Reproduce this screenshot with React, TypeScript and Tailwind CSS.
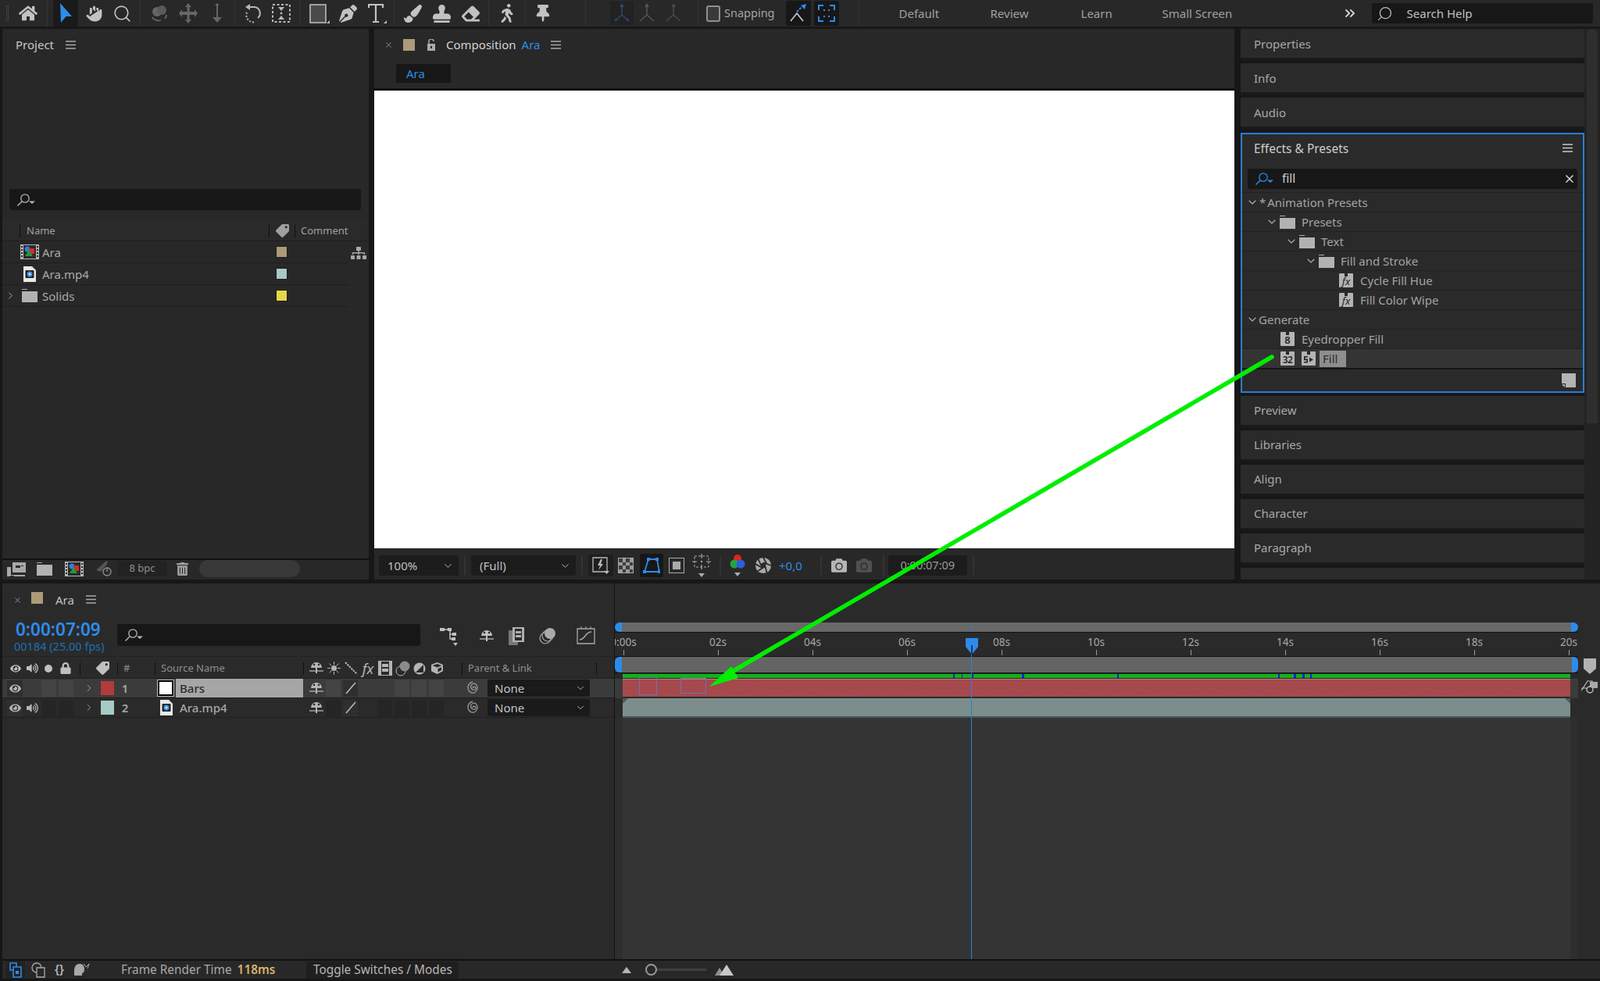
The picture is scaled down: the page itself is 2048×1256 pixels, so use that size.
import React from "react";
import { Hand, Search, X, ChevronDown, ChevronRight, ChevronsRight } from "lucide-react";
import { FaHome, FaPaintBrush, FaStamp, FaEraser, FaThumbtack, FaPenNib, FaCamera, FaEye, FaLock, FaVolumeUp, FaTag, FaSitemap, FaTrashAlt, FaWalking, FaCube } from "react-icons/fa";

const Menu = ({ c = "#a8a8a8" }: { c?: string }) => (
  <svg width="13" height="11" viewBox="0 0 13 11"><path d="M0 1h13M0 5.5h13M0 10h13" stroke={c} strokeWidth="1.3" /></svg>
);

const Find = ({ c = "#b4b4b4" }: { c?: string }) => (
  <svg width="25" height="18" viewBox="0 0 25 18" fill="none">
    <circle cx="11" cy="7" r="5.2" stroke={c} strokeWidth="1.3" />
    <path d="M7 11 L1.5 16.5" stroke={c} strokeWidth="1.5" />
    <path d="M16 10.5h8l-4 3.5z" fill={c} />
  </svg>
);

const Comp = ({ w = 24, h = 19 }: { w?: number; h?: number }) => (
  <svg width={w} height={h} viewBox="0 0 24 19">
    <rect x="0" y="0" width="24" height="19" fill="#b5b5b5" />
    <rect x="4" y="1" width="16" height="17" fill="#2a2a2a" />
    <path d="M1 2h2v2H1zM1 6h2v2H1zM1 10h2v2H1zM1 14h2v2H1zM21 2h2v2h-2zM21 6h2v2h-2zM21 10h2v2h-2zM21 14h2v2h-2z" fill="#2a2a2a" />
    <circle cx="9" cy="6" r="3.4" fill="#2d7fe0" />
    <rect x="11" y="5" width="7" height="7" fill="#d12c2c" />
    <path d="M11 7 L16 15 H6z" fill="#1f9a3a" />
  </svg>
);

const MovieFile = () => (
  <svg width="16" height="20" viewBox="0 0 16 20">
    <path d="M0 0h11l5 5v15H0z" fill="#e8e8e8" />
    <rect x="2.5" y="5" width="11" height="10" rx="1" fill="#222" />
    <circle cx="8" cy="10" r="3.4" fill="#3f97e8" />
    <circle cx="8" cy="10" r="1.3" fill="#dcecff" />
  </svg>
);

const Badge = ({ kind }: { kind: "fx" | "8" | "32" | "fr" }) => (
  <span className="relative flex h-[18px] w-[18px] shrink-0 items-end justify-center rounded-[1px] bg-[#b4b4b4] text-[#262626]">
    <span className="absolute left-[7px] top-0 h-[4px] w-[4px] bg-[#292929]" />
    {kind === "fx" && <span className="font-['Liberation_Serif',serif] text-[13px] italic leading-[15px]">fx</span>}
    {kind === "8" && <span className="text-[13px] font-semibold leading-[15px]">8</span>}
    {kind === "32" && <span className="text-[12px] font-semibold leading-[14px] tracking-[-0.5px]">32</span>}
    {kind === "fr" && (
      <svg width="14" height="11" viewBox="0 0 14 11" className="mb-[2px]"><path d="M1 1h5v1.6H2.6v2H6v5H1V8h3.4V6.2H1zM8 2.5l5 3-5 3z" fill="#262626" /></svg>
    )}
  </span>
);

const Folder = () => (
  <svg width="20" height="17" viewBox="0 0 20 17" className="block"><path d="M0 0h7v1H0zM0 3h20v14H0z" fill="#b2b2b2" /></svg>
);

const Chevron = () => <ChevronDown size={16} strokeWidth={1.6} className="shrink-0 text-[#b0b0b0]" />;

const Orbit = () => (
  <svg width="26" height="26" viewBox="0 0 26 26" fill="none">
    <circle cx="10" cy="11" r="6" fill="#666" /><circle cx="16" cy="9" r="6" fill="#5a5a5a" />
    <path d="M4 18c2 4 7 5 11 4M22 15c0 2-1 4-2 5" stroke="#666" strokeWidth="1.8" />
  </svg>
);
const MoveCross = () => (
  <svg width="24" height="26" viewBox="0 0 24 26"><path d="M12 0l4 5h-2.5v6H20V8l4 5-4 5v-3h-6.500v6H16l-4 5-4-5h2.500v-6H4v3l-4-5 4-5v3h6.500V5H8z" fill="#666" /></svg>
);
const Dolly = () => (
  <svg width="18" height="26" viewBox="0 0 18 26"><path d="M9 0l3 3h-2v15h5l-6 7-6-7h5V3H6z" fill="#666" /></svg>
);
const RotateTool = () => (
  <svg width="24" height="26" viewBox="0 0 24 26" fill="none">
    <path d="M6 5h8a8 8 0 0 1 4 14" stroke="#b9b9b9" strokeWidth="2" />
    <path d="M8 1L2 5l6 4z" fill="#b9b9b9" />
    <path d="M4 12a9 9 0 0 0 11 12" stroke="#b9b9b9" strokeWidth="2" strokeDasharray="2 2" />
  </svg>
);
const Anchor = () => (
  <svg width="24" height="24" viewBox="0 0 24 24" fill="none">
    <rect x="1" y="1" width="22" height="22" stroke="#b9b9b9" strokeWidth="2" strokeDasharray="3 2.500" />
    <path d="M8 4h8l-4 5zM8 20h8l-4-5z" fill="#b9b9b9" /><circle cx="12" cy="12" r="1.400" fill="#b9b9b9" />
  </svg>
);
const RectTool = () => (
  <svg width="26" height="25" viewBox="0 0 26 25"><rect x="1" y="1" width="20" height="23" fill="#4a4a4a" stroke="#b9b9b9" strokeWidth="1.600" /><path d="M26 25h-4l4-4z" fill="#b9b9b9" /></svg>
);
const TypeTool = () => (
  <svg width="24" height="25" viewBox="0 0 24 25" fill="none"><path d="M1 5V1h18v4M10 1v21M6 23h8" stroke="#c2c2c2" strokeWidth="2.200" /><path d="M24 25h-4l4-4z" fill="#b9b9b9" /></svg>
);
const Axis = ({ c, filled }: { c: string; filled?: boolean }) => (
  <svg width="24" height="26" viewBox="0 0 24 26" fill="none">
    <path d="M12 2v13M12 15L3 23M12 15l9 8" stroke={c} strokeWidth="1.500" />
    <path d="M12 0l3 5H9z" fill={c} />
    {filled && <path d="M3 23l1-4 3 3zM21 23l-1-4-3 3z" fill={c} />}
  </svg>
);
const Snap1 = () => (
  <svg width="22" height="24" viewBox="0 0 22 24" fill="none">
    <path d="M1 22 L9 12 L17 22" stroke="#c9c9c9" strokeWidth="1.700" />
    <path d="M9 10l6-6" stroke="#2d8ceb" strokeWidth="2" strokeDasharray="3 1.500" /><path d="M21 0l-2 7-5-5z" fill="#2d8ceb" />
  </svg>
);
const Snap2 = () => (
  <svg width="22" height="22" viewBox="0 0 22 22" fill="none">
    <path d="M1 7V1h6M15 1h6v6M1 15v6h6M15 21h6v-6" stroke="#2d8ceb" strokeWidth="2" />
    <path d="M7 7h2M13 7h2M7 15h2M13 15h2" stroke="#2d8ceb" strokeWidth="2" />
  </svg>
);

const TG = ({ cls, children }: { cls: string; children?: React.ReactNode }) => (
  <div className={`flex h-full shrink-0 items-center border-l border-[#333] ${cls}`}>{children}</div>
);
const Slot = ({ children, wide }: { children: React.ReactNode; wide?: boolean }) => (
  <span className={`relative flex shrink-0 justify-center ${wide ? "w-[37px]" : "w-[36px]"}`}>{children}</span>
);

const Toolbar = () => (
  <div className="flex h-[34px] items-center bg-[#282828] text-[#c2c2c2]">
    <div className="flex h-full w-[60px] shrink-0 items-center pl-[8px]">
      <span className="mr-[13px] h-[20px] w-[3px] border-x border-dotted border-[#555]" />
      <FaHome size={24} />
    </div>
    <TG cls="w-[119px] pl-[5px]">
      <Slot>
        <span className="flex h-[34px] w-[32px] items-center justify-center rounded-[3px] bg-[#1a1a1a]">
          <svg width="18" height="26" viewBox="0 0 18 26"><path d="M2 0 L17 17 L9.500 17 L3 25z" fill="#2d8ceb" /></svg>
        </span>
      </Slot>
      <Slot><Hand size={25} fill="#c2c2c2" strokeWidth={1} stroke="#282828" /></Slot>
      <Slot><Search size={25} strokeWidth={1.5} /></Slot>
    </TG>
    <TG cls="w-[121px] pl-[5px]"><Slot wide><Orbit /></Slot><Slot wide><MoveCross /></Slot><Slot wide><Dolly /></Slot></TG>
    <TG cls="w-[84px] pl-[5px]"><Slot><RotateTool /></Slot><Slot><Anchor /></Slot></TG>
    <TG cls="w-[120px] pl-[5px]"><Slot wide><RectTool /></Slot><Slot wide><FaPenNib size={23} /></Slot><Slot wide><TypeTool /></Slot></TG>
    <TG cls="w-[121px] pl-[5px]"><Slot wide><FaPaintBrush size={23} /></Slot><Slot wide><FaStamp size={23} /></Slot><Slot wide><FaEraser size={23} /></Slot></TG>
    <TG cls="w-[47px] pl-[4px]"><Slot wide><FaWalking size={24} /></Slot></TG>
    <TG cls="w-[77px] pl-[3px]"><Slot wide><FaThumbtack size={22} /></Slot></TG>
    <div className="flex h-full w-[144px] shrink-0 items-center border-l border-[#333] pl-[31px]">
      <span className="flex h-[30px] w-[30px] items-center justify-center rounded-[2px] bg-[#222]"><Axis c="#2c4a6b" filled /></span>
      <span className="ml-[5px]"><Axis c="#555" /></span>
      <span className="ml-[10px]"><Axis c="#4a4a4a" /></span>
    </div>
    <div className="flex h-full shrink-0 items-center border-l border-[#333] pl-[10px]">
      <span className="h-[21px] w-[18px] rounded-[3px] border-2 border-[#8f8f8f] bg-[#3a3a3a]" />
      <span className="ml-[5px] text-[14.500px] text-[#a4a4a4]">Snapping</span>
      <span className="ml-[14px] flex h-[32px] w-[32px] items-center justify-center rounded-[3px] bg-[#171717]"><Snap1 /></span>
      <span className="ml-[4px] flex h-[32px] w-[32px] items-center justify-center rounded-[3px] bg-[#171717]"><Snap2 /></span>
    </div>
    <div className="ml-[25px] flex h-full items-center border-l border-[#333] text-[15px] text-[#a0a0a0]">
      <span className="ml-[51px] w-[117px]">Default</span>
      <span className="w-[116px]">Review</span>
      <span className="w-[104px]">Learn</span>
      <span className="w-[234px]">Small Screen</span>
      <ChevronsRight size={20} strokeWidth={2.4} className="-ml-[4px] mr-[18px] text-[#d0d0d0]" />
      <div className="flex h-[26px] w-[283px] items-center rounded-[3px] bg-[#171717] pl-[6px] text-[#c0c0c0]">
        <Search size={21} strokeWidth={1.4} className="-scale-x-100" />
        <span className="ml-[18px]">Search Help</span>
      </div>
    </div>
  </div>
);

const PRow = ({ icon, name, sw, chev }: { icon: React.ReactNode; name: string; sw: string; chev?: boolean }) => (
  <div className="flex h-[28px] items-center border-b border-[#1e1e1e] text-[15px] text-[#a8a8a8]">
    <span className="flex w-[20px] shrink-0 justify-center">{chev && <ChevronRight size={15} strokeWidth={1.600} />}</span>
    <span className="flex w-[29px] shrink-0 justify-center">{icon}</span>
    <span className="ml-[2px] w-[299px] pt-[2px]">{name}</span>
    <span className="h-[15px] w-[15px] border border-[#1e1e1e]" style={{ background: sw }} />
  </div>
);

const ProjectPanel = () => (
  <div className="flex h-full w-[469px] shrink-0 flex-col bg-[#282828] text-[#a8a8a8]">
    <div className="flex h-[40px] items-center pl-[17px] text-[15px] text-[#c8c8c8]">
      <span>Project</span><span className="ml-[15px]"><Menu /></span>
    </div>
    <div className="h-[165px]" />
    <div className="ml-[9px] flex h-[27px] w-[450px] items-center rounded-[3px] bg-[#171717] pl-[9px]"><Find /></div>
    <div className="mt-[12px] flex h-[28px] w-[466px] items-center border-b border-[#1e1e1e] bg-[#2a2a2a] pt-[2px] text-[13px] text-[#a0a0a0]">
      <span className="ml-[22px] h-[16px] w-[1px] bg-[#111]" />
      <span className="ml-[8px] w-[310px]">Name</span>
      <span className="h-[16px] w-[1px] bg-[#111]" />
      <FaTag size={17} className="mx-[7.500px] rotate-90" />
      <span className="h-[16px] w-[1px] bg-[#111]" />
      <span className="ml-[7px]">Comment</span>
    </div>
    <div className="flex">
      <div className="w-[443px] shrink-0">
        <PRow icon={<Comp />} name="Ara" sw="#ac9a78" />
        <PRow icon={<MovieFile />} name="Ara.mp4" sw="#a6cac6" />
        <PRow icon={<Folder />} name="Solids" sw="#e4d84a" chev />
      </div>
      <div className="flex flex-1 justify-center pt-[5px] text-[#a8a8a8]"><FaSitemap size={20} /></div>
    </div>
    <div className="flex-1" />
    <div className="flex h-[27px] items-center border-t-2 border-[#111] pb-[3px] text-[#a0a0a0]">
      <span className="ml-[5px] flex">
        <svg width="25" height="19" viewBox="0 0 25 19"><path d="M8 1h17v13H8z" fill="#a8a8a8" /><path d="M12 5h6v3h-6zM19 5h3v1h-3z" fill="#282828" /><path d="M1 7h5v10h18v2H10v-1H5v1H1z" fill="#a8a8a8" /></svg>
      </span>
      <span className="ml-[14px]"><Folder /></span>
      <span className="ml-[16px] flex"><Comp /></span>
      <span className="ml-[15px] flex">
        <svg width="22" height="22" viewBox="0 0 22 22" fill="none"><path d="M1 13 L13 2 L16 1 L15 5 L7 15z" fill="#555" /><circle cx="15" cy="15" r="5" stroke="#8c8c8c" strokeWidth="1.400" /><path d="M15 9v6" stroke="#8c8c8c" strokeWidth="1.400" /></svg>
      </span>
      <span className="ml-[6px] flex h-[20px] w-[64px] items-center justify-center rounded-[3px] bg-[#222] text-[13px] text-[#909090]">8 bpc</span>
      <FaTrashAlt size={17} className="ml-[11px]" />
      <span className="ml-[13px] h-[22px] w-[129px] rounded-full bg-[#383838]" />
    </div>
  </div>
);

const FootSep = () => <span className="mx-[7px] h-[24px] w-[2px] shrink-0 bg-[#333]" />;
const Drop = ({ cls, label }: { cls: string; label: string }) => (
  <div className={`flex h-[26px] shrink-0 items-center justify-between rounded-[3px] bg-[#1c1c1c] pl-[11px] pr-[6px] text-[15px] text-[#c0c0c0] ${cls}`}>
    <span>{label}</span><ChevronDown size={15} strokeWidth={1.500} />
  </div>
);

const CompFooter = () => (
  <div className="flex h-[39px] items-center pl-[6px] pt-[5px] text-[#b5b5b5]">
    <Drop cls="w-[102px]" label="100%" />
    <FootSep />
    <Drop cls="w-[134px]" label="(Full)" />
    <FootSep />
    <span className="flex h-[28px] w-[32px] items-center justify-center rounded-[3px] bg-[#1f1f1f]">
      <svg width="22" height="22" viewBox="0 0 22 22" fill="none"><path d="M1 1h18v18H1z" stroke="#bbb" strokeWidth="1.300" /><path d="M11 3L7 11h3l-2 6 6-8h-3l2-6z" fill="#bbb" /><path d="M15 18h7l-3.500 4z" fill="#bbb" /></svg>
    </span>
    <span className="ml-[6px] grid h-[20px] w-[20px] grid-cols-4 border border-[#aaa]">
      {Array.from({ length: 16 }).map((_, i) => <span key={i} className={(i + (i >> 2)) % 2 ? "bg-[#9a9a9a]" : "bg-[#3d3d3d]"} />)}
    </span>
    <span className="ml-[8px] flex h-[30px] w-[30px] items-center justify-center rounded-[3px] bg-[#171717]">
      <svg width="22" height="20" viewBox="0 0 22 20" fill="none"><path d="M7 2h11l3 16H2z" stroke="#2d8ceb" strokeWidth="1.800" /><path d="M5 0h4v4H5zM16 0h4v4h-4zM0 16h4v4H0zM19 16h3v4h-3z" fill="#2d8ceb" /></svg>
    </span>
    <span className="ml-[7px] flex h-[20px] w-[20px] items-center justify-center border border-[#aaa]"><span className="h-[10px] w-[10px] bg-[#aaa]" /></span>
    <span className="ml-[10px] mr-[4px] flex">
      <svg width="24" height="30" viewBox="0 0 24 30" fill="none"><path d="M3 3h18v14H3z" stroke="#aaa" strokeDasharray="3 2" /><path d="M12 0v6M12 14v6M0 10h6M18 10h6" stroke="#aaa" strokeWidth="1.200" /><circle cx="12" cy="10" r="1.200" fill="#aaa" /><path d="M8 25h8l-4 5z" fill="#aaa" /></svg>
    </span>
    <FootSep />
    <span className="ml-[3px] flex">
      <svg width="22" height="30" viewBox="0 0 22 30"><circle cx="11" cy="6" r="5" fill="#e0241f" /><circle cx="7" cy="13" r="5.500" fill="#27a33c" /><circle cx="15" cy="13" r="5.500" fill="#2b5fe0" /><path d="M7 24h8l-4 5z" fill="#aaa" /></svg>
    </span>
    <span className="ml-[11px] flex">
      <svg width="22" height="24" viewBox="0 0 24 24" fill="none">
        <circle cx="12" cy="12" r="11" fill="#aaa" />
        <path d="M12 1 L17 10 M23 12 L12 8 M17 22 L14 11 M4 20 L12 15 M1 10 L10 15 M5 3 L9 12" stroke="#2a2a2a" strokeWidth="2" />
        <circle cx="12" cy="12" r="3.500" fill="#2a2a2a" />
      </svg>
    </span>
    <span className="ml-[9px] mr-[16px] text-[15px] text-[#2d8ceb]">+0,0</span>
    <FootSep />
    <FaCamera size={20} className="ml-[5px]" />
    <FaCamera size={20} className="ml-[12px] mr-[7px] text-[#515151]" />
    <FootSep />
    <span className="-ml-[2px] flex h-[26px] w-[101px] items-center justify-center rounded-[3px] bg-[#1c1c1c] text-[14.500px] text-[#9a9a9a]">0:00:07:09</span>
    <FootSep />
  </div>
);

const CompPanel = () => (
  <div className="ml-[7px] flex h-full w-[1101px] shrink-0 flex-col bg-[#282828]">
    <div className="flex h-[40px] items-center text-[15px] text-[#d2d2d2]">
      <X size={11} className="ml-[13px] text-[#9a9a9a]" />
      <span className="ml-[13px] h-[15px] w-[15px] bg-[#ac9a78]" />
      <span className="ml-[15px]">
        <svg width="12" height="15" viewBox="0 0 12 15" fill="none"><path d="M3 6V3a3 3 0 0 1 6 0" stroke="#aaa" strokeWidth="1.500" /><rect x="1" y="6" width="10" height="9" fill="#aaa" /><rect x="5" y="9" width="2" height="3" fill="#282828" /></svg>
      </span>
      <span className="ml-[13px]">Composition</span>
      <span className="ml-[7px] text-[#2d8ceb]">Ara</span>
      <span className="ml-[14px]"><Menu /></span>
    </div>
    <div className="ml-[28px] mt-[5px] flex h-[24px] w-[70px] items-center rounded-[2px] bg-[#171717] pl-[13px] text-[15px] text-[#2d8ceb]">Ara</div>
    <div className="mt-[7px] h-[3px] bg-[#111]" />
    <div className="h-[586px] w-full bg-white" />
    <CompFooter />
  </div>
);

const Tab = ({ t, cls = "" }: { t: string; cls?: string }) => (
  <div className={`mb-[4px] flex h-[40px] shrink-0 items-center border-b-[3px] border-[#1a1a1a] bg-[#2a2a2a] pl-[17px] text-[15px] text-[#a8a8a8] ${cls}`}>{t}</div>
);

const ERow = ({ pad, children, cls = "" }: { pad: string; children: React.ReactNode; cls?: string }) => (
  <div className={`flex h-[25px] items-center border-t border-[#222] text-[15px] text-[#a4a4a4] ${pad} ${cls}`}>{children}</div>
);

const EffectsPanel = () => (
  <div className="mb-[4px] flex h-[333px] shrink-0 flex-col border-2 border-[#2b7dd4] bg-[#2a2a2a]">
    <div className="flex h-[44px] shrink-0 items-start justify-between pl-[15px] pr-[13px] pt-[7px] text-[15.500px] text-[#cccccc]">
      <span>Effects &amp; Presets</span><span className="mt-[5px]"><Menu c="#c8c8c8" /></span>
    </div>
    <div className="mx-[7px] flex h-[26px] items-center justify-between rounded-[3px] bg-[#171717] pl-[9px] pr-[2px] text-[15.500px] text-[#cccccc]">
      <span className="flex items-center"><Find c="#2d8ceb" /><span className="ml-[10px]">fill</span></span>
      <X size={16} strokeWidth={2.500} className="text-[#d0d0d0]" />
    </div>
    <div className="mt-[4px] flex flex-col">
      <ERow pad="pl-[5px]"><Chevron /><span className="ml-[1px] -mr-[3px]">*</span><span className="ml-[5px]">Animation Presets</span></ERow>
      <ERow pad="pl-[30px]"><Chevron /><span className="ml-[2px]"><Folder /></span><span className="ml-[8px]">Presets</span></ERow>
      <ERow pad="pl-[55px]"><Chevron /><span className="ml-[2px]"><Folder /></span><span className="ml-[8px]">Text</span></ERow>
      <ERow pad="pl-[80px]"><Chevron /><span className="ml-[2px]"><Folder /></span><span className="ml-[8px]">Fill and Stroke</span></ERow>
      <ERow pad="pl-[124px]"><Badge kind="fx" /><span className="ml-[9px]">Cycle Fill Hue</span></ERow>
      <ERow pad="pl-[124px]"><Badge kind="fx" /><span className="ml-[9px]">Fill Color Wipe</span></ERow>
      <ERow pad="pl-[5px]"><Chevron /><span>Generate</span></ERow>
      <ERow pad="pl-[49px]"><Badge kind="8" /><span className="ml-[9px]">Eyedropper Fill</span></ERow>
      <ERow pad="pl-[49px]" cls="bg-[#343434]">
        <Badge kind="32" /><span className="ml-[9px]"><Badge kind="fr" /></span>
        <span className="ml-[5px] flex h-[21px] w-[34px] items-center bg-[#8e8e8e] pl-[4px] text-[#2c2c2c]">Fill</span>
      </ERow>
    </div>
    <div className="flex flex-1 items-center justify-end border-t-2 border-[#141414] pr-[9px]">
      <svg width="18" height="18" viewBox="0 0 18 18"><path d="M0 0h18v18H5v-5H0z" fill="#b4b4b4" /><path d="M0 14h4v4z" fill="#b4b4b4" /></svg>
    </div>
  </div>
);

const RightColumn = () => (
  <div className="ml-[8px] flex h-full w-[440px] shrink-0 flex-col overflow-hidden">
    <Tab t="Properties" cls="pt-[2px]" /><Tab t="Info" cls="pt-[2px]" /><Tab t="Audio" cls="pt-[2px]" />
    <div className="mt-[1px]"><EffectsPanel /></div>
    <Tab t="Preview" /><Tab t="Libraries" /><Tab t="Align" /><Tab t="Character" /><Tab t="Paragraph" />
    <div className="flex h-[40px] shrink-0 items-start bg-[#2a2a2a] pl-[17px] pt-[9px] text-[15px] text-[#a8a8a8]">Tools</div>
  </div>
);

const Scroll = () => (
  <div className="flex h-full flex-1 justify-center bg-[#232323]">
    <div className="h-[505px] w-[14px] rounded-t-[6px] bg-[#2e2e2e]" />
  </div>
);

const SwitchBox = ({ on }: { on?: boolean }) => (
  <span className={`block h-[21px] w-[19px] shrink-0 ${on ? "bg-[#444]" : "bg-[#252525]"}`} />
);

const Shy = ({ c = "#b5b5b5" }: { c?: string }) => (
  <svg width="18" height="19" viewBox="0 0 18 19" fill="none" className="block"><path d="M2 9a7 7 0 0 1 14 0z" fill={c} /><path d="M8 9h2v7H8z" fill={c} /><path d="M0 13h18" stroke={c} strokeWidth="1.300" /><circle cx="6" cy="5" r="1.300" fill="#2a2a2a" /><circle cx="12" cy="5" r="1.300" fill="#2a2a2a" /></svg>
);

const Spiral = () => (
  <svg width="17" height="18" viewBox="0 0 17 18" fill="none" className="block"><path d="M8 9a2 2 0 1 1 3 2 4 4 0 1 1 2-6c2 3 1 8-3 10a6.500 6.500 0 0 1-8-6c0-4 2-7 6-8" stroke="#9a9a9a" strokeWidth="1.300" /></svg>
);

const ParentDrop = () => (
  <span className="ml-[10.500px] flex h-[22px] w-[131px] shrink-0 items-center justify-between rounded-[2px] bg-[#1a1a1a] pl-[9px] pr-[5px] text-[15px] text-[#c2c2c2]">
    None<ChevronDown size={14} strokeWidth={1.500} />
  </span>
);

const LayerRow = ({ n, label, selected, name, nameIcon, audio, boxes }: { n: string; label: string; selected?: boolean; name: string; nameIcon: React.ReactNode; audio?: boolean; boxes: number }) => (
  <div className={`flex h-[25px] items-center border-b border-[#1f1f1f] ${selected ? "bg-[#3b3b3b]" : "bg-[#2a2a2a]"} text-[#b5b5b5]`}>
    <span className="ml-[6px] flex h-[21px] w-[20px] shrink-0 items-center justify-center bg-[#2f2f2f]"><FaEye size={15} /></span>
    <span className="ml-[1px] flex w-[22px] shrink-0 justify-center">{audio && <FaVolumeUp size={15} />}</span>
    <span className="ml-[1px]"><SwitchBox on={selected} /></span>
    <span className="ml-[3px]"><SwitchBox on={selected} /></span>
    <span className="ml-[13px] flex w-[14px] shrink-0 justify-center"><ChevronRight size={14} strokeWidth={1.400} /></span>
    <span className="ml-[7.500px] h-[18px] w-[17px] shrink-0" style={{ background: label }} />
    <span className="ml-[6.500px] w-[16px] shrink-0 text-center text-[15px] font-semibold text-[#a8a8a8]">{n}</span>
    <span className="ml-[34px] flex w-[23px] shrink-0 justify-start">{nameIcon}</span>
    <span className={`h-full w-[163px] shrink-0 pl-[5px] text-[15px] leading-[24px] ${selected ? "bg-[#a6a6a6] font-medium text-[#2c2c2c]" : "font-medium text-[#a8a8a8]"}`}>{name}</span>
    <span className="ml-[8px] shrink-0"><Shy /></span>
    <span className="ml-[3px]"><SwitchBox on={selected} /></span>
    <span className="ml-[3px] flex h-[21px] w-[19px] shrink-0 items-center justify-center bg-[#2f2f2f]">
      <svg width="14" height="16" viewBox="0 0 14 16"><path d="M1 15 L13 1" stroke="#bdbdbd" strokeWidth="1.500" /></svg>
    </span>
    <span className="ml-[22px] flex w-[88px] shrink-0 justify-end gap-[3px]">
      {Array.from({ length: boxes }).map((_, i) => <SwitchBox key={i} on={selected} />)}
    </span>
    <span className="ml-[28.500px] shrink-0"><Spiral /></span>
    <ParentDrop />
  </div>
);

const HSlot = ({ children }: { children: React.ReactNode }) => <span className="flex w-[22px] shrink-0 justify-center">{children}</span>;

const LeftTimeline = () => (
  <div className="flex h-full w-[783px] shrink-0 flex-col text-[#a8a8a8]">
    <div className="flex h-[48px] items-start pl-[14px] pt-[10px] text-[15px] text-[#c2c2c2]">
      <X size={11} className="mt-[6px] text-[#9a9a9a]" />
      <span className="ml-[12px] mt-[1px] h-[15px] w-[15px] bg-[#ac9a78]" />
      <span className="ml-[16px]">Ara</span>
      <span className="ml-[15px] mt-[5px]"><Menu /></span>
    </div>
    <div className="flex h-[45px] items-start">
      <div className="w-[147px] shrink-0 pl-[17px]">
        <div className="text-[22.500px] font-semibold leading-[22px] text-[#2d8ceb]">0:00:07:09</div>
        <div className="-ml-[2px] mt-[2px] whitespace-nowrap text-[14.500px] leading-[17px] text-[#1e6fb5]">00184 (25.00 fps)</div>
      </div>
      <div className="mt-[4px] flex h-[28px] w-[388px] items-center rounded-[3px] bg-[#171717] pl-[9px]"><Find /></div>
      <div className="ml-[25px] mt-[6px] flex items-center text-[#a8a8a8]">
        <svg width="24" height="26" viewBox="0 0 24 26" fill="none"><path d="M3 5h10M13 5v6h5M13 11v6h4" stroke="#c0c0c0" strokeWidth="1.500" /><rect x="0" y="3" width="6" height="4" fill="#c0c0c0" /><rect x="10" y="3" width="5" height="4" fill="#c0c0c0" /><rect x="16" y="9" width="5" height="4" fill="#c0c0c0" /><rect x="15" y="15" width="5" height="4" fill="#c0c0c0" /><path d="M17 22h6l-3 4z" fill="#c0c0c0" /></svg>
        <span className="ml-[27px]"><Shy c="#c0c0c0" /></span>
        <span className="ml-[19px] flex">
          <svg width="20" height="24" viewBox="0 0 20 24"><rect x="0" y="5" width="12" height="19" fill="#777" /><rect x="5" y="1" width="15" height="19" fill="#b0b0b0" /><rect x="8" y="3" width="9" height="15" fill="#2a2a2a" /><path d="M9 6h7v3H9zM9 11h7v3H9z" fill="#b0b0b0" /></svg>
        </span>
        <span className="ml-[19px] flex">
          <svg width="22" height="24" viewBox="0 0 22 24" fill="none"><circle cx="8" cy="15" r="7" stroke="#aaa" strokeWidth="1.200" /><circle cx="11" cy="12" r="7" stroke="#aaa" strokeWidth="1.200" /><circle cx="14" cy="9" r="7" fill="#aaa" /></svg>
        </span>
        <span className="ml-[26px] flex">
          <svg width="24" height="26" viewBox="0 0 24 26" fill="none"><path d="M1 4h22v19H1z" stroke="#aaa" strokeWidth="1.300" /><path d="M4 18c7 0 7-10 15-10" stroke="#aaa" strokeWidth="1.500" /><path d="M6 1v3M12 1v3M18 1v3" stroke="#aaa" /></svg>
        </span>
      </div>
    </div>
    <div className="flex h-[29px] items-center border-y border-[#222] pt-[2px] text-[13px] text-[#8f8f8f]">
      <span className="ml-[8px] flex w-[17px] justify-center"><FaEye size={14} className="text-[#c0c0c0]" /></span>
      <span className="ml-[3px] flex w-[20px] justify-center"><FaVolumeUp size={15} className="text-[#c0c0c0]" /></span>
      <span className="ml-[6px] h-[10px] w-[10px] rounded-full bg-[#c0c0c0]" />
      <span className="ml-[10px] flex w-[14px] justify-center"><FaLock size={15} className="text-[#c0c0c0]" /></span>
      <span className="ml-[11px] h-[16px] w-[1px] bg-[#111]" />
      <FaTag size={17} className="ml-[19.500px] rotate-90 text-[#c0c0c0]" />
      <span className="ml-[10.500px] h-[16px] w-[1px] bg-[#111]" />
      <span className="ml-[7px] w-[40px]">#</span>
      <span className="h-[16px] w-[1px] bg-[#111]" />
      <span className="ml-[7px] w-[182px]">Source Name</span>
      <span className="h-[16px] w-[1px] bg-[#111]" />
      <span className="ml-[5px] flex items-center text-[#b5b5b5]">
        <HSlot><Shy c="#b5b5b5" /></HSlot>
        <HSlot><svg width="17" height="17" viewBox="0 0 17 17"><circle cx="8.500" cy="8.500" r="3.500" fill="#b5b5b5" /><path d="M8.500 0v4M8.500 13v4M0 8.500h4M13 8.500h4M2.500 2.500l3 3M11.500 11.500l3 3M2.500 14.500l3-3M11.500 5.500l3-3" stroke="#b5b5b5" /></svg></HSlot>
        <HSlot><svg width="17" height="17" viewBox="0 0 17 17"><path d="M1 1l15 15" stroke="#b5b5b5" strokeWidth="2" strokeDasharray="2.500 1" /></svg></HSlot>
        <HSlot><span className="font-['Liberation_Serif',serif] text-[18px] italic leading-none">fx</span></HSlot>
        <HSlot><svg width="18" height="19" viewBox="0 0 18 19"><path d="M0 0h18v19H0z" fill="#b5b5b5" /><path d="M4 1h10v17H4z" fill="#2a2a2a" /><path d="M5 4h8v4H5zM5 10h8v4H5z" fill="#b5b5b5" /></svg></HSlot>
        <HSlot><svg width="19" height="20" viewBox="0 0 19 20" fill="none"><circle cx="7" cy="13" r="6" stroke="#b5b5b5" /><circle cx="12" cy="7" r="6.500" fill="#8a8a8a" /></svg></HSlot>
        <HSlot><svg width="16" height="16" viewBox="0 0 16 16"><circle cx="8" cy="8" r="7.500" fill="#b5b5b5" /><path d="M3 13L13 3v10z" fill="#2a2a2a" /></svg></HSlot>
        <HSlot><FaCube size={15} /></HSlot>
      </span>
      <span className="ml-[21px] h-[16px] w-[1px] bg-[#111]" />
      <span className="ml-[7px] w-[164px]">Parent &amp; Link</span>
      <span className="h-[16px] w-[1px] bg-[#111]" />
    </div>
    <LayerRow n="1" label="#b13a3c" selected name="Bars" audio={false} boxes={3}
      nameIcon={<span className="h-[20px] w-[20px] border-2 border-black bg-white outline outline-[1px] outline-[#bbb]" />} />
    <LayerRow n="2" label="#a6cac6" name="Ara.mp4" audio boxes={4} nameIcon={<span className="ml-[3px] flex"><MovieFile /></span>} />
    <div className="flex-1" />
  </div>
);

const TICKS = ["0:00s", "02s", "04s", "06s", "08s", "10s", "12s", "14s", "16s", "18s", "20s"];
const BLUE_MARKS = [
  { x: 423, w: 2 }, { x: 434, w: 1 }, { x: 447, w: 2 }, { x: 511, w: 3 }, { x: 633, w: 2 },
  { x: 839, w: 2 }, { x: 859, w: 3 }, { x: 870, w: 3 }, { x: 880, w: 2 },
];

const RightTimeline = () => (
  <div className="relative h-full w-[1234px] shrink-0 border-l border-[#111]">
    <div className="h-[50px]" />
    <div className="flex h-[12px] w-[1233px]">
      <span className="h-[12px] w-[9px] rounded-l-full bg-[#2d8ceb]" />
      <span className="h-[12px] flex-1 bg-[#686868]" />
      <span className="h-[12px] w-[9px] rounded-r-full bg-[#2d8ceb]" />
    </div>
    <div className="flex h-[31px] overflow-hidden border-t border-[#111] text-[13.500px] text-[#a8a8a8]">
      {TICKS.map((t, i) => (
        <div key={t} className={`flex h-full w-[121px] shrink-0 flex-col items-center ${i === 0 ? "-ml-[49.500px]" : ""}`}>
          <span className="mt-[3px] leading-[18px]">{t}</span>
          <span className="mt-[1px] h-[7px] w-[1px] bg-[#999]" />
        </div>
      ))}
    </div>
    <div className="flex h-[22px] border-y border-[#111]">
      <span className="h-full w-[9px] rounded-l-[6px] bg-[#2d8ceb]" />
      <span className="h-full flex-1 bg-[#646464]" />
      <span className="h-full w-[8px] rounded-r-[6px] bg-[#2d8ceb]" />
    </div>
    <div className="flex h-[7px] bg-[#282828] px-[10px] pt-[1px]">
      <div className="relative h-[5px] w-[1213px] bg-[#11b01f]">
        {BLUE_MARKS.map((m) => <span key={m.x} className="absolute top-0 h-full bg-[#1020d8]" style={{ left: m.x, width: m.w }} />)}
      </div>
    </div>
    <div className="flex h-[calc(100%-122px)]">
      <div className="flex w-[10px] shrink-0 flex-col">
        <div className="h-[25px] bg-[#3b3b3b]" /><div className="h-[25px] bg-[#2a2a2a]" /><div className="flex-1 bg-[#2e2e2e]" />
      </div>
      <div className="flex w-[1213px] shrink-0 flex-col bg-[#343434]">
        <div className="relative h-[25px] border-b-2 border-[#2b2b2b] border-t border-t-[#c77a7a] bg-[#a84b50]">
          <svg className="absolute left-0 top-0" width="1213" height="22">
            <filter id="grain"><feTurbulence type="fractalNoise" baseFrequency="0.9" numOctaves="2" /><feColorMatrix values="0 0 0 0 0.3  0 0 0 0 0.05  0 0 0 0 0.05  0 0 0 0.5 -0.1" /></filter>
            <rect width="1213" height="22" filter="url(#grain)" />
          </svg>
          <span className="absolute left-[21px] top-[-3px] h-[23px] w-[23px] border border-[#6a74a8]" />
          <span className="absolute left-[74px] top-[-2px] h-[20px] w-[33px] border border-[#6a74a8]" />
        </div>
        <div className="relative h-[25px] rounded-tl-[4px] border-b-2 border-[#4a5a58] bg-[#7b8e8c]">
          <span className="absolute left-0 top-0 h-0 w-0 border-r-[7px] border-t-[7px] border-r-transparent border-t-[#4e5b59]" />
          <span className="absolute right-0 top-0 h-0 w-0 border-l-[7px] border-t-[7px] border-l-transparent border-t-[#4e5b59]" />
        </div>
      </div>
      <div className="flex w-[10px] shrink-0 flex-col">
        <div className="h-[25px] bg-[#3b3b3b]" /><div className="h-[25px] bg-[#2a2a2a]" /><div className="flex-1 bg-[#2e2e2e]" />
      </div>
    </div>
    <div className="absolute left-[449px] top-[70px] flex flex-col items-center">
      <svg width="16" height="21" viewBox="0 0 16 21"><path d="M0 0h16v11l-8 10-8-10z" fill="#2d8ceb" /><path d="M7.300 9h1.400v12H7.300z" fill="#1a1a1a" /></svg>
    </div>
    <span className="absolute bottom-0 left-[456px] top-[91px] w-[1px] bg-[#2d7fd6]" />
    <span className="absolute left-[456px] top-[50px] h-[12px] w-[1px] bg-[#2d7fd6]" />
  </div>
);

const MarkerColumn = () => (
  <div className="flex flex-1 flex-col items-center pl-[2px]">
    <div className="h-[96px]" />
    <svg width="16" height="20" viewBox="0 0 16 20"><path d="M0 0h16v13l-8 7-8-7z" fill="#b2b2b2" /></svg>
    <div className="mt-[7px]">
      <svg width="22" height="18" viewBox="0 0 22 18" fill="none"><path d="M1 13 L8 2h6v9H1z" fill="#2a2a2a" stroke="#c0c0c0" strokeWidth="1.200" /><path d="M11 3h10v8H11z" fill="#a8a8a8" /><circle cx="11" cy="13" r="4" fill="#2a2a2a" stroke="#c0c0c0" strokeWidth="1.400" /></svg>
    </div>
  </div>
);

const StatusBar = () => (
  <div className="flex h-[25px] shrink-0 items-center border-t-2 border-[#111] bg-[#282828] text-[15.400px] text-[#a8a8a8]">
    <span className="ml-[5px] flex h-[23px] w-[24px] items-center justify-center bg-[#222]">
      <svg width="16" height="20" viewBox="0 0 16 20" fill="none"><path d="M1 1h8v9H1z" stroke="#2d8ceb" strokeWidth="1.600" /><path d="M5 6h10v13H5z" fill="#222" stroke="#2d8ceb" strokeWidth="1.600" /><rect x="8" y="11" width="4" height="4" fill="#2d8ceb" /></svg>
    </span>
    <span className="ml-[8px] flex">
      <svg width="18" height="20" viewBox="0 0 18 20" fill="none"><circle cx="7" cy="7" r="6" stroke="#aaa" strokeWidth="1.300" /><path d="M7 7h10v12H7z" fill="#282828" stroke="#aaa" strokeWidth="1.300" /></svg>
    </span>
    <span className="ml-[12px] font-semibold text-[#b4b4b4]">{"{}"}</span>
    <span className="ml-[11px] flex">
      <svg width="22" height="20" viewBox="0 0 22 20"><path d="M2 11c0-6 3-9 7-9s6 3 6 7-2 5-3 5v3H2z" fill="#a8a8a8" /><path d="M14 2l3 4 4-4-2 6" stroke="#a8a8a8" fill="none" /></svg>
    </span>
    <span className="ml-[40px]">Frame Render Time</span>
    <span className="ml-[7px] font-semibold text-[#d6b36a]">118ms</span>
    <span className="ml-[40px] flex h-[22px] w-[195px] shrink-0 items-center justify-center rounded-[3px] bg-[#1f1f1f] text-[#b5b5b5]">Toggle Switches / Modes</span>
    <span className="ml-[209px] flex">
      <svg width="12" height="8" viewBox="0 0 12 8"><path d="M6 0l6 8H0z" fill="#b5b5b5" /></svg>
    </span>
    <span className="ml-[18px] h-[15px] w-[15px] shrink-0 rounded-full border-2 border-[#9a9a9a]" />
    <span className="h-[3px] w-[63px] bg-[#3f3f3f]" />
    <span className="ml-[11px] flex">
      <svg width="24" height="14" viewBox="0 0 24 14"><path d="M6 4l6 10H0z" fill="#8f8f8f" /><path d="M15 0l9 14H6z" fill="#c8c8c8" /></svg>
    </span>
  </div>
);

const Timeline = () => (
  <div className="ml-[3px] mt-[5px] flex h-[506px] flex-col bg-[#2a2a2a]">
    <div className="flex min-h-0 flex-1">
      <LeftTimeline />
      <RightTimeline />
      <MarkerColumn />
    </div>
    <StatusBar />
  </div>
);

const Arrow = () => (
  <svg className="pointer-events-none absolute left-0 top-0" width="2048" height="1256" viewBox="0 0 2048 1256" fill="none">
    <path d="M1628 457 L930 864" stroke="#00ee00" strokeWidth="5.500" strokeLinecap="round" />
    <path d="M908 879 L936 853 L945 868z" fill="#00ee00" />
  </svg>
);

export default function App() {
  return (
    <div className="relative h-[1256px] w-[2048px] overflow-hidden bg-[#171717] font-['Noto_Sans','Open_Sans',sans-serif]">
      <Toolbar />
      <div className="mt-[3px] flex h-[705px] pl-[3px]">
        <ProjectPanel />
        <CompPanel />
        <RightColumn />
        <Scroll />
      </div>
      <Timeline />
      <Arrow />
    </div>
  );
}
